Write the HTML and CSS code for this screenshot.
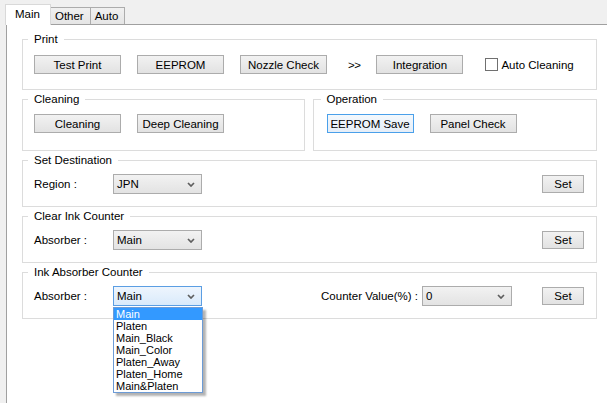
FILE: index.html
```html
<!DOCTYPE html>
<html lang="en">
<head>
    <meta charset="UTF-8">
    <title>Maintenance</title>
    <link rel="stylesheet" href="styles.css">
</head>
<body>
    <div class="tabs">
        <div class="tab active">Main</div>
        <div class="tab">Other</div>
        <div class="tab">Auto</div>
    </div>

    <div class="pane">
        <fieldset class="group">
            <legend>Print</legend>
            <div class="row">
                <button class="btn">Test Print</button>
                <button class="btn">EEPROM</button>
                <button class="btn">Nozzle Check</button>
                <span class="arrows">&gt;&gt;</span>
                <button class="btn">Integration</button>
                <label class="check"><span class="box"></span>Auto Cleaning</label>
            </div>
        </fieldset>

        <div class="split">
            <fieldset class="group">
                <legend>Cleaning</legend>
                <div class="row">
                    <button class="btn">Cleaning</button>
                    <button class="btn">Deep Cleaning</button>
                </div>
            </fieldset>
            <fieldset class="group operation">
                <legend>Operation</legend>
                <div class="row">
                    <button class="btn focused">EEPROM Save</button>
                    <button class="btn">Panel Check</button>
                </div>
            </fieldset>
        </div>

        <fieldset class="group field">
            <legend>Set Destination</legend>
            <div class="row">
                <span class="label">Region :</span>
                <div class="combo">
                    <span class="value">JPN</span>
                    <svg class="chev" viewBox="0 0 8 5"><polyline points="1,1 4,4 7,1"/></svg>
                </div>
                <button class="btn set">Set</button>
            </div>
        </fieldset>

        <fieldset class="group field">
            <legend>Clear Ink Counter</legend>
            <div class="row">
                <span class="label">Absorber :</span>
                <div class="combo">
                    <span class="value">Main</span>
                    <svg class="chev" viewBox="0 0 8 5"><polyline points="1,1 4,4 7,1"/></svg>
                </div>
                <button class="btn set">Set</button>
            </div>
        </fieldset>

        <fieldset class="group field">
            <legend>Ink Absorber Counter</legend>
            <div class="row">
                <span class="label">Absorber :</span>
                <div class="combo open">
                    <span class="value">Main</span>
                    <svg class="chev" viewBox="0 0 8 5"><polyline points="1,1 4,4 7,1"/></svg>
                    <ul class="droplist">
                        <li class="selected">Main</li>
                        <li>Platen</li>
                        <li>Main_Black</li>
                        <li>Main_Color</li>
                        <li>Platen_Away</li>
                        <li>Platen_Home</li>
                        <li>Main&amp;Platen</li>
                    </ul>
                </div>
                <span class="label counter">Counter Value(%) :</span>
                <div class="combo value-combo">
                    <span class="value">0</span>
                    <svg class="chev" viewBox="0 0 8 5"><polyline points="1,1 4,4 7,1"/></svg>
                </div>
                <button class="btn set">Set</button>
            </div>
        </fieldset>
    </div>
</body>
</html>
```

FILE: styles.css
```css
html, body {
    margin: 0;
    height: 100%;
}
body {
    font-family: "Liberation Sans", Arial, sans-serif;
    font-size: 11.5px;
    color: #000;
    background-color: #f0f0f0;
    display: flex;
    flex-direction: column;
    overflow: hidden;
}

/* tab strip */
.tabs {
    display: flex;
    align-items: flex-end;
    height: 24px;
    padding-left: 5px;
}
.tab {
    height: 16px;
    line-height: 16px;
    padding: 0 6px 0 4px;
    border: 1px solid #acacac;
    border-bottom: none;
    background: linear-gradient(#f0f0f0, #e5e5e5);
    margin-left: -1px;
}
.tab.active {
    height: 20px;
    line-height: 18px;
    padding: 0 10px 0 9px;
    background: #fff;
    border-color: #d9d9d9;
    margin-left: 0;
    margin-bottom: -1px;
    position: relative;
    z-index: 1;
}

.pane {
    flex: 1;
    background: #fff;
    margin-left: 6px;
    border-top: 1px solid #a0a0a0;
    border-left: 1px solid #a0a0a0;
    padding: 8px 10px 0 15px;
    display: flex;
    flex-direction: column;
    gap: 3px;
}

/* group boxes */
.group {
    margin: 0;
    border: 1px solid #dcdcdc;
    padding: 10px 12px 15px 11px;
    min-width: 0;
}
.group legend {
    padding: 0 6px;
    margin-left: -6px;
    line-height: 12px;
}
.group.field {
    padding: 8px 12px 12px 11px;
}
.split {
    display: flex;
    gap: 8px;
}
.split .group {
    flex: 1;
    padding-top: 9px;
    padding-bottom: 17px;
}
.split .operation {
    padding-left: 13px;
}

.row {
    display: flex;
    align-items: center;
    gap: 16px;
}
.field .row {
    gap: 0;
}

/* buttons */
.btn {
    font: inherit;
    color: #000;
    width: 87px;
    height: 19px;
    padding: 0;
    border: 1px solid #acacac;
    background: linear-gradient(#f2f2f2, #e2e2e2);
}
.btn.focused {
    border-color: #4aa0ea;
    background: linear-gradient(#f3f8fd, #e6eef7);
}
.btn.set {
    width: 42px;
    height: 18px;
    margin-left: auto;
}
.value-combo + .btn.set {
    margin-left: 30px;
}

.arrows {
    letter-spacing: -0.5px;
    margin: 0 0 0 5px;
}

.check {
    display: flex;
    align-items: center;
    gap: 3px;
    margin-left: 6px;
}
.check .box {
    width: 11px;
    height: 11px;
    border: 1px solid #707070;
    background: #fff;
}

/* combo boxes */
.label {
    width: 79px;
}
.label.counter {
    width: auto;
    margin-left: auto;
    margin-right: 4px;
}
.combo {
    position: relative;
    box-sizing: border-box;
    width: 89px;
    height: 20px;
    border: 1px solid #acacac;
    background: linear-gradient(#f2f2f2, #e3e3e3);
    display: flex;
    align-items: center;
    padding: 0 6px 0 3px;
}
.combo.value-combo {
    width: 90px;
}
.combo .value {
    flex: 1;
}
.chev {
    width: 8px;
    height: 5px;
    fill: none;
    stroke: #5e5e5e;
    stroke-width: 1.7;
}
.combo.open {
    border-color: #5b9ee3;
    background: linear-gradient(#eef5fd, #d9eafb);
}

.droplist {
    position: absolute;
    top: 20px;
    left: -1px;
    width: 90px;
    box-sizing: border-box;
    margin: 0;
    padding: 0;
    list-style: none;
    background: #fff;
    border: 1px solid #6c9bd6;
    box-shadow: 3px 3px 2px rgba(0, 0, 0, 0.3);
    z-index: 2;
}
.droplist li {
    height: 12px;
    line-height: 12px;
    font-size: 11px;
    padding-left: 2px;
}
.droplist li.selected {
    background: #3399ff;
    color: #fff;
}
```
